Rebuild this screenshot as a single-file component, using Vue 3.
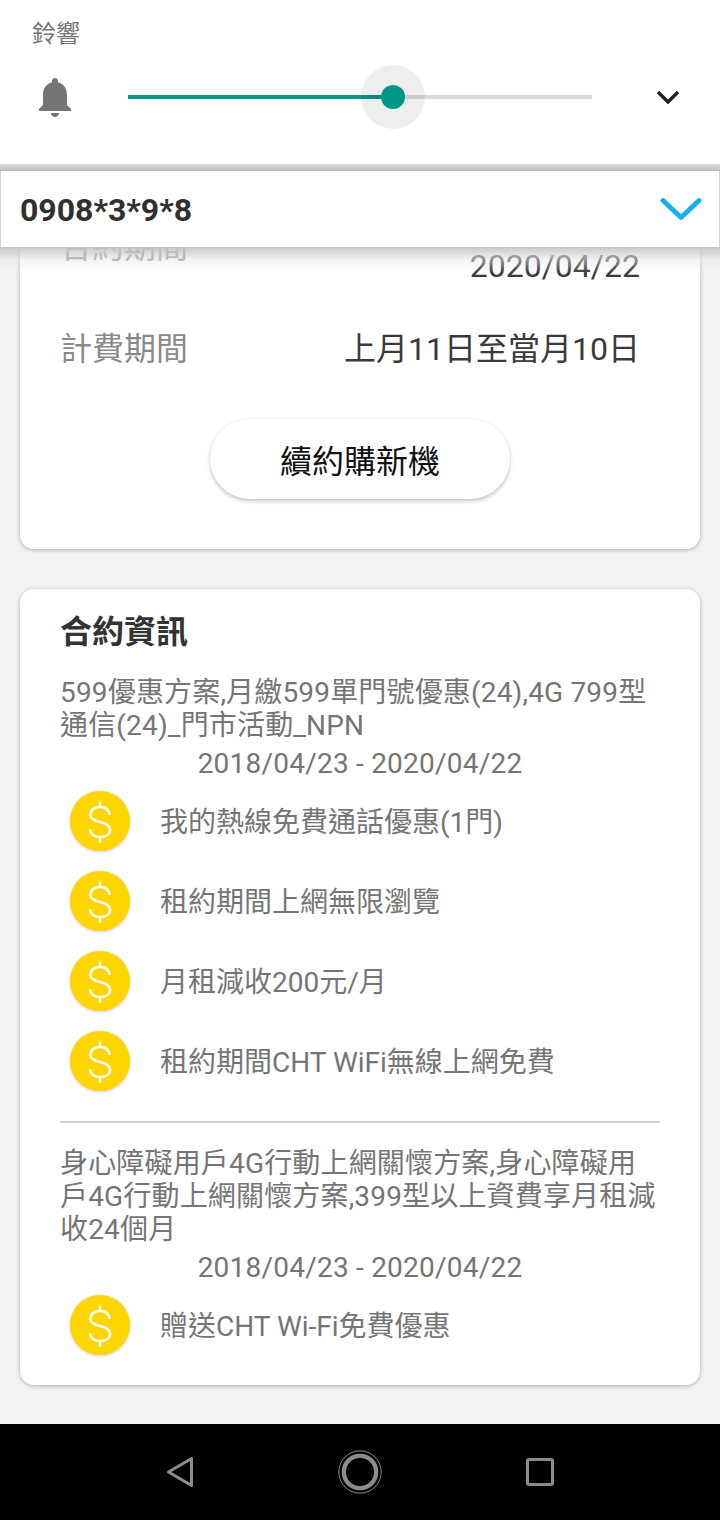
<script setup>
const plan1 = ['我的熱線免費通話優惠(1門)', '租約期間上網無限瀏覽', '月租減收200元/月', '租約期間CHT WiFi無線上網免費']
const plan2 = ['贈送CHT Wi-Fi免費優惠']
const dollar = 'M39.5 24C39 18.500 35 16 30 16C24.500 16 20.500 19 20.500 23.500C20.500 28.500 25 30 30 31C35.500 32.200 40 34 40 39C40 43.500 35.500 46 30 46C24.500 46 20.500 43.500 20 38M30 10.500V16M30 46V52'
</script>

<template>
  <div class="screen">
    <header class="ringer">
      <div class="ringer-label">鈴響</div>
      <div class="ringer-row">
        <svg class="bell" viewBox="0 0 24 24" width="48" height="48">
          <path fill="#757575" d="M12 22c1.100 0 2-.9 2-2h-4c0 1.100.89 2 2 2zm6-6v-5c0-3.070-1.640-5.640-4.500-6.320V4c0-.83-.67-1.500-1.500-1.500s-1.500.67-1.500 1.500v.68C7.630 5.360 6 7.920 6 11v5l-2 2v1h16v-1l-2-2z" />
        </svg>
        <div class="slider">
          <div class="fill"></div>
          <div class="halo"></div>
          <div class="thumb"></div>
        </div>
        <svg class="chev" viewBox="0 0 24 14" width="24" height="14">
          <path d="M2 2l10 10L22 2" fill="none" stroke="#212121" stroke-width="3.400" />
        </svg>
      </div>
    </header>
    <div class="band"></div>

    <div class="account">
      <span class="number">0908*3*9*8</span>
      <svg viewBox="0 0 42 24" width="42" height="24">
        <path d="M3 3.500L21 20.500L39 3.500" fill="none" stroke="#12b0f5" stroke-width="4.800" stroke-linecap="round" stroke-linejoin="round" />
      </svg>
    </div>

    <main class="content">
      <section class="card card-top">
        <div class="info-row first">
          <span class="label">合約期間</span>
          <span class="value">2020/04/22</span>
        </div>
        <div class="info-row">
          <span class="label">計費期間</span>
          <span class="value">上月11日至當月10日</span>
        </div>
        <button class="renew">續約購新機</button>
      </section>

      <section class="card card-plan">
        <h2>合約資訊</h2>
        <p class="desc">599優惠方案,月繳599單門號優惠(24),4G 799型通信(24)_門市活動_NPN</p>
        <p class="dates">2018/04/23 - 2020/04/22</p>
        <ul>
          <li v-for="t in plan1" :key="t">
            <span class="coin">
              <svg viewBox="0 0 60 60" width="60" height="60"><path :d="dollar" fill="none" stroke="#fff" stroke-width="2.500" /></svg>
            </span>
            <span class="item-text">{{ t }}</span>
          </li>
        </ul>
        <hr />
        <p class="desc">身心障礙用戶4G行動上網關懷方案,身心障礙用戶4G行動上網關懷方案,399型以上資費享月租減收24個月</p>
        <p class="dates">2018/04/23 - 2020/04/22</p>
        <ul>
          <li v-for="t in plan2" :key="t">
            <span class="coin">
              <svg viewBox="0 0 60 60" width="60" height="60"><path :d="dollar" fill="none" stroke="#fff" stroke-width="2.500" /></svg>
            </span>
            <span class="item-text">{{ t }}</span>
          </li>
        </ul>
      </section>
    </main>

    <nav class="navbar">
      <svg viewBox="0 0 30 34" width="30" height="34"><path d="M3.500 17L26.500 3.500v27z" fill="none" stroke="#8c8c8c" stroke-width="3" stroke-linejoin="round" /></svg>
      <svg viewBox="0 0 44 44" width="44" height="44"><circle cx="22" cy="22" r="21.200" fill="none" stroke="#8c8c8c" stroke-width="1" /><circle cx="22" cy="22" r="16.200" fill="none" stroke="#8c8c8c" stroke-width="4.300" /></svg>
      <svg viewBox="0 0 28 28" width="28" height="28"><rect x="1.500" y="1.500" width="25" height="25" rx="1.500" fill="none" stroke="#8c8c8c" stroke-width="3" /></svg>
    </nav>
  </div>
</template>

<style>
body { margin: 0; background: #f2f2f2; }
</style>

<style scoped>
.screen {
  width: 720px;
  height: 1520px;
  display: flex;
  flex-direction: column;
  overflow: hidden;
  background: #f2f2f2;
  font-family: Roboto, "Noto Sans CJK TC", sans-serif;
}
.ringer {
  height: 164px;
  flex: none;
  box-sizing: border-box;
  padding: 17px 0 0 32px;
  background: #fff;
}
.band {
  height: 7px;
  flex: none;
  background: linear-gradient(#dcdcdc, #bcbcbc);
}
.ringer-label {
  font-size: 24px;
  line-height: 34px;
  color: #757575;
}
.ringer-row {
  display: flex;
  align-items: center;
  height: 48px;
  margin-top: 22px;
}
.bell { flex: none; margin-left: -1px; }
.slider {
  position: relative;
  flex: none;
  width: 464px;
  height: 4px;
  margin-left: 49px;
  background: #dcdcdc;
}
.fill {
  position: absolute;
  left: 0;
  top: 0;
  width: 265px;
  height: 4px;
  background: #009688;
}
.halo {
  position: absolute;
  left: 233px;
  top: -30px;
  width: 64px;
  height: 64px;
  border-radius: 50%;
  background: rgba(0, 0, 0, .065);
}
.thumb {
  position: absolute;
  left: 253px;
  top: -10px;
  width: 24px;
  height: 24px;
  border-radius: 50%;
  background: #009688;
}
.chev { flex: none; margin-left: 64px; }
.account {
  height: 76px;
  flex: none;
  box-sizing: border-box;
  padding: 0 17px 0 20px;
  display: flex;
  align-items: center;
  justify-content: space-between;
  background: #fff;
  border-left: 1px solid #d4d4d4;
  border-right: 1px solid #d4d4d4;
  position: relative;
  z-index: 2;
}
.account::after {
  content: "";
  position: absolute;
  left: -1px;
  right: -1px;
  top: 100%;
  height: 26px;
  background: linear-gradient(rgba(196, 196, 196, .95), rgba(232, 232, 232, .5) 50%, rgba(255, 255, 255, 0));
  pointer-events: none;
}
.number {
  font-size: 32px;
  font-weight: 700;
  color: #303030;
  margin-left: -1px;
  position: relative;
  top: 1px;
}
.content {
  flex: 1;
  min-height: 0;
  overflow: hidden;
  padding: 0 20px;
}
.card {
  background: #fff;
  border-radius: 14px;
  box-shadow: 0 1px 4px rgba(0, 0, 0, .28);
}
.card-top {
  height: 321px;
  margin-top: -19px;
  padding: 0 40px;
  box-sizing: border-box;
  overflow: hidden;
}
.info-row {
  display: flex;
  justify-content: space-between;
  font-size: 32px;
  line-height: 44px;
  margin-top: 39px;
}
.info-row.first { margin-top: 0; height: 44px; padding-top: 16px; }
.info-row.first .label { margin-top: -19px; }
.label { color: #8a8a8a; }
.value { color: #3a3a3a; margin-right: 20px; }
.renew {
  display: block;
  width: 300px;
  height: 80px;
  margin: 48px auto 0;
  border: 0;
  border-radius: 40px;
  background: #fff;
  box-shadow: 0 2px 4px rgba(0, 0, 0, .25);
  font: inherit;
  font-size: 32px;
  color: #111;
}
.card-plan {
  margin-top: 40px;
  padding: 19px 40px 0;
  height: 796px;
  box-sizing: border-box;
}
h2 {
  margin: 0;
  font-size: 32px;
  font-weight: 700;
  line-height: 48px;
  color: #333;
}
.desc {
  margin: 20px 0 0;
  font-size: 28px;
  line-height: 33px;
  letter-spacing: .17px;
  color: #757575;
}
.dates {
  margin: 5px 0 0;
  font-size: 28px;
  line-height: 34px;
  letter-spacing: .22px;
  color: #757575;
  text-align: center;
}
ul {
  list-style: none;
  margin: 0;
  padding: 0;
}
li {
  display: flex;
  align-items: center;
  height: 80px;
  font-size: 28px;
  color: #757575;
}
.item-text { padding-bottom: 2px; }
.coin {
  flex: none;
  width: 60px;
  height: 60px;
  margin: 0 30px 0 10px;
  border-radius: 50%;
  background: #ffd600;
  display: flex;
  align-items: center;
  justify-content: center;
  box-shadow: 0 1px 3px rgba(0, 0, 0, .22);
}
hr {
  margin: 20px 0 24px;
  border: 0;
  height: 2px;
  background: #cfcfcf;
}
.navbar {
  height: 96px;
  flex: none;
  background: #000;
  display: grid;
  grid-template-columns: repeat(3, 180px);
  justify-content: center;
  justify-items: center;
  align-items: center;
}
</style>
